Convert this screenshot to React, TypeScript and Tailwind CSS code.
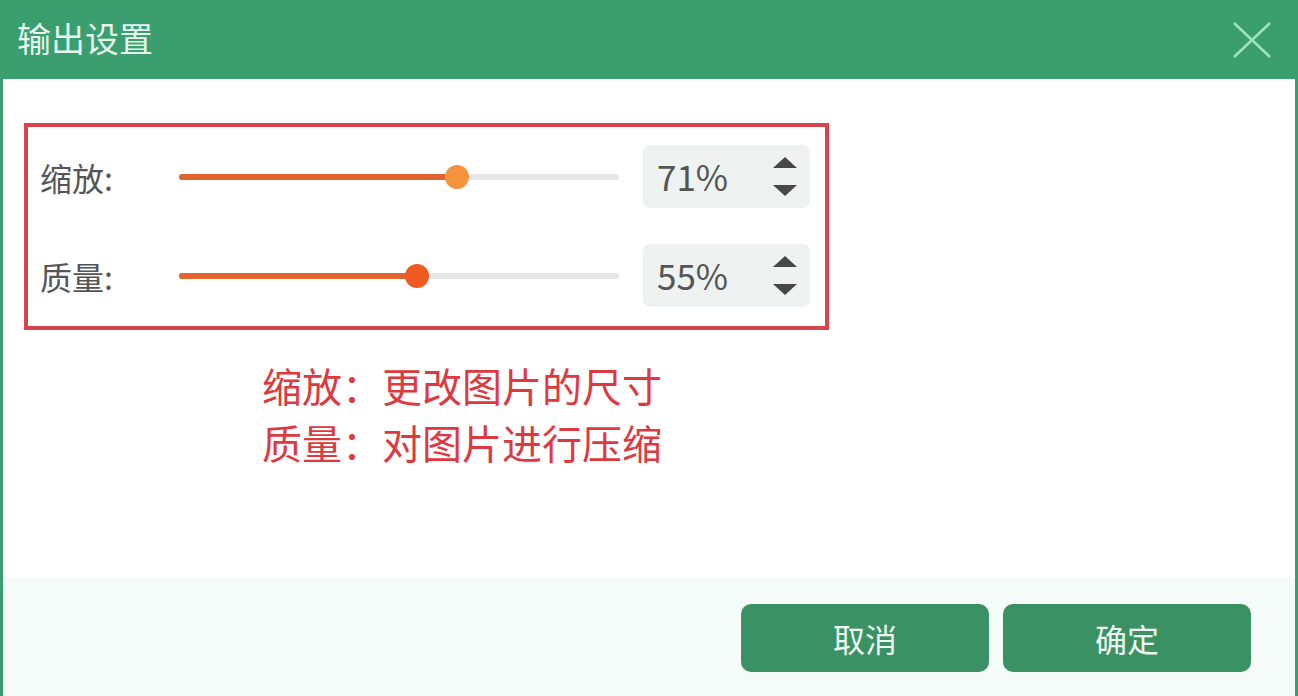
import React from "react";

const font = { fontFamily: '"Noto Sans CJK SC", "Noto Sans", sans-serif' };

function Row({ label, value, fill, thumbColor }: { label: string; value: string; fill: number; thumbColor: string }) {
  return (
    <div className="flex items-center h-[63px]">
      <div className="w-[139px] text-[32px] leading-none text-[#555555]">{label}</div>
      <div className="relative w-[440px] h-[6px] bg-[#e6e6e6] rounded-full">
        <div className="absolute left-0 top-0 h-[6px] bg-[#e2632d] rounded-full" style={{ width: fill }} />
        <div
          className="absolute top-[-9px] w-[24px] h-[24px] rounded-full"
          style={{ left: fill - 12, backgroundColor: thumbColor }}
        />
      </div>
      <div className="ml-[24px] w-[167px] h-[63px] bg-[#eef2f0] rounded-[7px] flex items-center justify-between pl-[14px] pr-[13px]">
        <span className="text-[35px] leading-none text-[#555555] pb-[2px]">{value}</span>
        <div className="flex flex-col items-center gap-[17px]">
          <svg width="24" height="11" viewBox="0 0 24 11"><polygon points="12,0 24,11 0,11" fill="#474747" /></svg>
          <svg width="24" height="11" viewBox="0 0 24 11"><polygon points="0,0 24,0 12,11" fill="#474747" /></svg>
        </div>
      </div>
    </div>
  );
}

export default function App() {
  return (
    <div className="w-[1298px] h-[696px] flex flex-col bg-[#3a9e6e] overflow-hidden" style={font}>
      <div className="h-[79px] flex items-center justify-between pl-[17px] pr-[27px] shrink-0">
        <span className="text-[34px] leading-none text-[#e4f6ed] pb-[3px]">输出设置</span>
        <svg width="38" height="36" viewBox="0 0 38 36">
          <line x1="1" y1="1" x2="37" y2="35" stroke="#9fe3bd" strokeWidth="2.5" />
          <line x1="37" y1="1" x2="1" y2="35" stroke="#9fe3bd" strokeWidth="2.5" />
        </svg>
      </div>
      <div className="flex-1 mx-[3px] bg-white flex flex-col">
        <div className="flex-1 pt-[44px] pl-[21px]">
          <div className="w-[805px] h-[207px] border-[4px] border-[#d9434a] pt-[18px] pl-[12px] flex flex-col gap-[36px]">
            <Row label="缩放:" value="71%" fill={278} thumbColor="#f5943c" />
            <Row label="质量:" value="55%" fill={238} thumbColor="#ef5a22" />
          </div>
          <div className="ml-[238px] mt-[27px] text-[40px] leading-[57px] text-[#dc3a40]">
            <div>缩放：更改图片的尺寸</div>
            <div>质量：对图片进行压缩</div>
          </div>
        </div>
        <div className="h-[118px] bg-[#f5fbf9] flex justify-end items-start pt-[26px] pr-[44px] gap-[14px] shrink-0">
          <button className="w-[248px] h-[68px] rounded-[10px] bg-[#3a9163] text-[32px] text-[#eef8f2] leading-none flex items-center justify-center">取消</button>
          <button className="w-[248px] h-[68px] rounded-[10px] bg-[#3a9163] text-[32px] text-[#eef8f2] leading-none flex items-center justify-center">确定</button>
        </div>
      </div>
    </div>
  );
}
